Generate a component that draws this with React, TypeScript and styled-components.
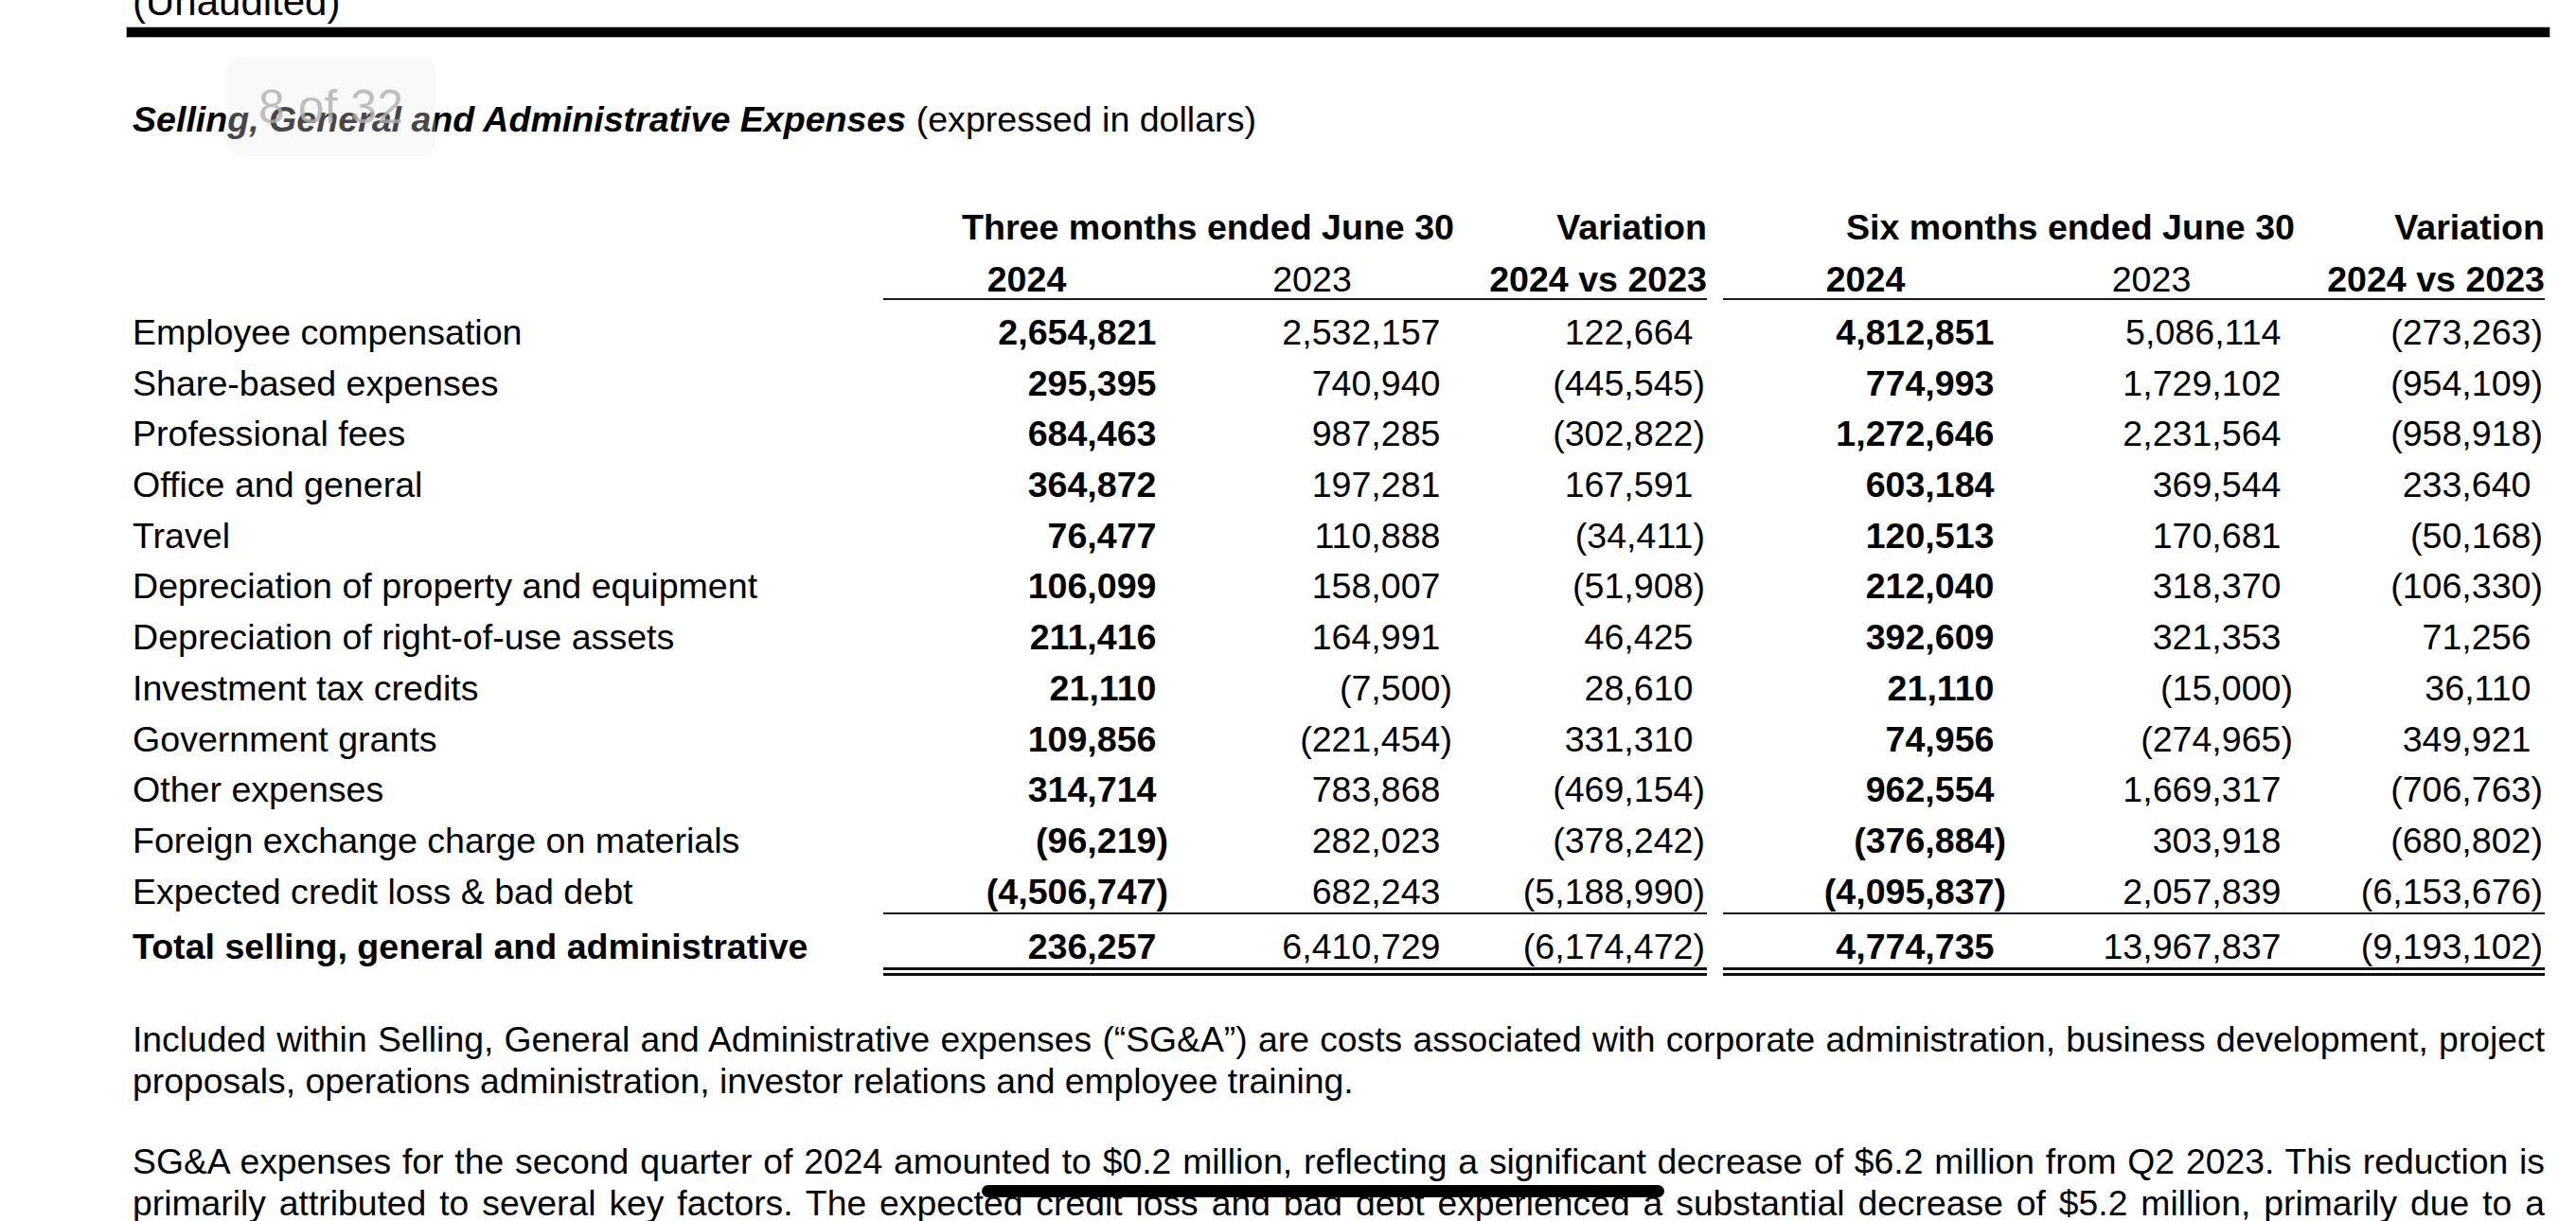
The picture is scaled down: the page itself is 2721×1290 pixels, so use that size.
import React from 'react'
import styled, { createGlobalStyle } from 'styled-components'

const GlobalStyle = createGlobalStyle`
    html, body {
        margin : 0;
        padding : 0;
        background : #fff;
        overflow : hidden;
    }
`

type Line = {
    label : string
    quarter : [string, string, string]
    halfYear : [string, string, string]
}

const lines: Line[] = [
    { label: 'Employee compensation', quarter: ['2,654,821', '2,532,157', '122,664'], halfYear: ['4,812,851', '5,086,114', '(273,263)'] },
    { label: 'Share-based expenses', quarter: ['295,395', '740,940', '(445,545)'], halfYear: ['774,993', '1,729,102', '(954,109)'] },
    { label: 'Professional fees', quarter: ['684,463', '987,285', '(302,822)'], halfYear: ['1,272,646', '2,231,564', '(958,918)'] },
    { label: 'Office and general', quarter: ['364,872', '197,281', '167,591'], halfYear: ['603,184', '369,544', '233,640'] },
    { label: 'Travel', quarter: ['76,477', '110,888', '(34,411)'], halfYear: ['120,513', '170,681', '(50,168)'] },
    { label: 'Depreciation of property and equipment', quarter: ['106,099', '158,007', '(51,908)'], halfYear: ['212,040', '318,370', '(106,330)'] },
    { label: 'Depreciation of right-of-use assets', quarter: ['211,416', '164,991', '46,425'], halfYear: ['392,609', '321,353', '71,256'] },
    { label: 'Investment tax credits', quarter: ['21,110', '(7,500)', '28,610'], halfYear: ['21,110', '(15,000)', '36,110'] },
    { label: 'Government grants', quarter: ['109,856', '(221,454)', '331,310'], halfYear: ['74,956', '(274,965)', '349,921'] },
    { label: 'Other expenses', quarter: ['314,714', '783,868', '(469,154)'], halfYear: ['962,554', '1,669,317', '(706,763)'] },
    { label: 'Foreign exchange charge on materials', quarter: ['(96,219)', '282,023', '(378,242)'], halfYear: ['(376,884)', '303,918', '(680,802)'] },
    { label: 'Expected credit loss & bad debt', quarter: ['(4,506,747)', '682,243', '(5,188,990)'], halfYear: ['(4,095,837)', '2,057,839', '(6,153,676)'] },
]

const total: Line = {
    label: 'Total selling, general and administrative',
    quarter: ['236,257', '6,410,729', '(6,174,472)'],
    halfYear: ['4,774,735', '13,967,837', '(9,193,102)'],
}

type RowKind = 'head' | 'sub' | 'body' | 'last' | 'total'
type Rule = 'single' | 'double'

// keeps positive figures lined up with the closing bracket of negatives
function Amount({ value }: { value: string }) {
    if (value.startsWith('(')) return <>{value}</>
    return <>{value}<Ghost>)</Ghost></>
}

function Figures({ values, rule }: { values: [string, string, string], rule?: Rule }) {
    return (
        <>
            <NumCell $bold $rule={rule}><Amount value={values[0]} /></NumCell>
            <NumCell $rule={rule}><Amount value={values[1]} /></NumCell>
            <NumCell $rule={rule}><Amount value={values[2]} /></NumCell>
        </>
    )
}

function ExpenseTable() {
    return (
        <Table>
            <Row $kind="head">
                <Cell />
                <Cell $bold $span={2}>Three months ended June 30</Cell>
                <Cell $bold>Variation</Cell>
                <Cell />
                <Cell $bold $span={2}>Six months ended June 30</Cell>
                <Cell $bold>Variation</Cell>
            </Row>
            <Row $kind="sub">
                <Cell />
                <Cell $bold $align="center" $rule="single">2024</Cell>
                <Cell $align="center" $rule="single">2023</Cell>
                <Cell $bold $rule="single">2024 vs 2023</Cell>
                <Cell />
                <Cell $bold $align="center" $rule="single">2024</Cell>
                <Cell $align="center" $rule="single">2023</Cell>
                <Cell $bold $rule="single">2024 vs 2023</Cell>
            </Row>

            {lines.map((line, i) => {
                const last = i === lines.length - 1
                const rule = last ? 'single' : undefined
                return (
                    <Row key={line.label} $kind={last ? 'last' : 'body'}>
                        <Cell $align="left">{line.label}</Cell>
                        <Figures values={line.quarter} rule={rule} />
                        <Cell />
                        <Figures values={line.halfYear} rule={rule} />
                    </Row>
                )
            })}

            <Row $kind="total">
                <Cell $align="left" $bold>{total.label}</Cell>
                <Figures values={total.quarter} rule="double" />
                <Cell />
                <Figures values={total.halfYear} rule="double" />
            </Row>
        </Table>
    )
}

function App() {
    return (
        <Page>
            <GlobalStyle />
            <Unaudited>(Unaudited)</Unaudited>
            <TopRule />

            <Heading>
                <Title>Selling, General and Administrative Expenses</Title> (expressed in dollars)
            </Heading>

            <ExpenseTable />

            <Para $gap={44.6}>
                Included within Selling, General and Administrative expenses (“SG&amp;A”) are costs associated
                with corporate administration, business development, project proposals, operations
                administration, investor relations and employee training.
            </Para>
            <Para $gap={41} $cut>
                SG&amp;A expenses for the second quarter of 2024 amounted to $0.2 million, reflecting a
                significant decrease of $6.2 million from Q2 2023. This reduction is primarily attributed to
                several key factors. The expected credit loss and bad debt experienced a substantial decrease
                of $5.2 million, primarily due to a
                <Marker />
            </Para>

            <PageBadge>8 of 32</PageBadge>
        </Page>
    )
}

export default App

const Page = styled.div
`
    position : relative;
    box-sizing : border-box;
    width : 2721px;
    height : 1290px;
    overflow : hidden;
    padding : 0 33px 0 140px;
    background : #fff;
    color : #000;
    font-family : "Liberation Sans", Arial, sans-serif;
`

const Unaudited = styled.div
`
    margin-top : -20.5px;
    font-size : 42px;
    line-height : 44px;
`

const TopRule = styled.div
`
    height : 10px;
    margin : 5.5px -5px 0 -6px;
    background : #000;
    box-shadow : 0 0 0 0.7px #9a9a9a;
`

const Heading = styled.h2
`
    margin : 65px 0 0;
    font-size : 37.6px;
    line-height : 44px;
    font-weight : 400;
`

const Title = styled.em
`
    font-weight : 700;
    font-style : italic;
`

const Table = styled.div
`
    margin-top : 72px;
    font-size : 37.6px;
`

const rowPadding: Record<RowKind, [number, number]> = {
    head : [0, 0],
    sub : [15, 0],
    body : [15, 0.7],
    last : [15, 3],
    total : [15.3, 3.5],
}

const Row = styled.div<{ $kind: RowKind }>
`
    display : grid;
    grid-template-columns : minmax(0, 1fr) 303px 300px 267px 17px 301px 303px 264px;
    line-height : ${p => p.$kind === 'head' || p.$kind === 'sub' ? 40 : 38}px;

    & > * {
        padding-top : ${p => rowPadding[p.$kind][0]}px;
        padding-bottom : ${p => rowPadding[p.$kind][1]}px;
    }
`

const Cell = styled.div<{ $align?: 'left' | 'center' | 'right', $bold?: boolean, $span?: number, $rule?: Rule }>
`
    grid-column : span ${p => p.$span ?? 1};
    text-align : ${p => p.$align ?? 'right'};
    font-weight : ${p => p.$bold ? 700 : 400};
    white-space : nowrap;
    border-bottom : ${p => p.$rule === 'double' ? '9px double #111' : p.$rule === 'single' ? '2px solid #1a1a1a' : 'none'};
`

const NumCell = styled(Cell)
`
    padding-right : 2px;
`

const Ghost = styled.span
`
    visibility : hidden;
`

const Para = styled.p<{ $gap: number, $cut?: boolean }>
`
    position : relative;
    margin : ${p => p.$gap}px 0 0;
    font-size : 37.3px;
    line-height : 44px;
    text-align : justify;
    text-align-last : ${p => p.$cut ? 'justify' : 'auto'};
`

// hand-drawn marker stroke over the second line
const Marker = styled.span
`
    position : absolute;
    left : 897px;
    top : 47px;
    width : 721px;
    height : 13px;
    border-radius : 7px;
    background : #000;
`

// viewer page indicator floating over the heading
const PageBadge = styled.div
`
    position : absolute;
    left : 239px;
    top : 60px;
    width : 221px;
    height : 105px;
    display : flex;
    align-items : center;
    justify-content : center;
    border-radius : 16px;
    background : rgba(236, 236, 236, 0.3);
    color : rgba(175, 175, 175, 0.8);
    font-size : 50px;
`
